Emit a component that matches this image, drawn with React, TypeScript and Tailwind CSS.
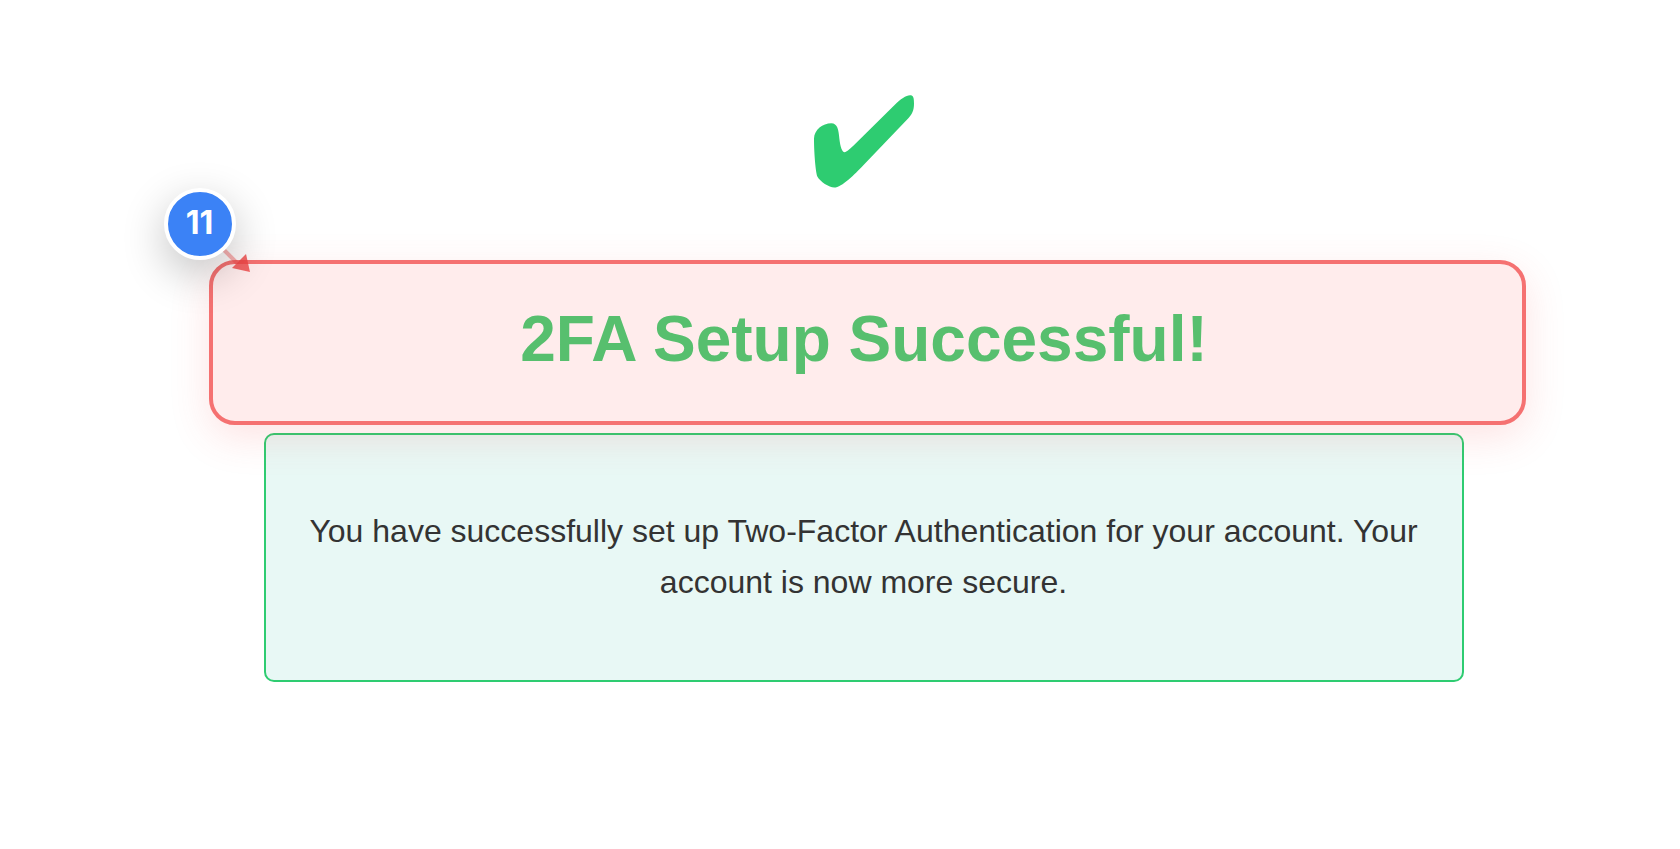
const STEP = 11;

function CheckMark() {
  return (
    <svg viewBox="102 75 300 278" className="mr-[6px] h-[93px] w-[100px]" fill="#2ecc71" aria-hidden="true">
      <path d="M102 205C103 178 128 159 154 159C172 159 176 178 178 205C181 230 186 246 194 246C200 246 208 238 220 227L343 105C362 86 378 75 390 75C400 75 402 82 402 100C402 122 396 132 385 144L250 285C225 311 185 352 163 352C147 352 120 334 112 319C106 300 102 240 102 205Z" />
    </svg>
  );
}

function StepMarker({ step }: { step: number }) {
  return (
    <>
      {/* Pointer from the badge to the highlighted area */}
      <svg
        viewBox="0 0 32 32"
        className="absolute -top-5 left-[7px] size-8"
        aria-hidden="true"
      >
        <path d="M4 6L17 19" stroke="#ef4444" strokeOpacity="0.4" strokeWidth="4" />
        <path d="M26 10L30 28L12 24Z" fill="#ef4444" fillOpacity="0.8" />
      </svg>
      <div className="absolute -left-[49px] -top-[76px] flex size-[72px] items-center justify-center rounded-full border-4 border-white bg-[#3b82f6] pb-[2px] font-[Inter,sans-serif] text-[32px] font-bold leading-none text-white shadow-[0_14px_44px_rgba(0,0,0,0.24)]">
        {step}
      </div>
    </>
  );
}

export default function App() {
  return (
    <main className="flex min-h-screen flex-col items-center bg-white pl-[54px] pt-[95px] font-['Liberation_Sans',Arial,sans-serif]">
      <div className="flex w-full max-w-[1317px] flex-col items-center">
        <CheckMark />

        <div className="relative z-10 mt-[72px] w-full rounded-[26px] border-4 border-[#f57171] bg-[#ffecec] pb-[42px] pr-[6px] pt-[35px] text-center shadow-[0_12px_40px_rgba(239,68,68,0.15)]">
          <h1 className="text-[64px] font-bold leading-[80px] text-[#57bf6e]">2FA Setup Successful!</h1>
          <StepMarker step={STEP} />
        </div>

        <div className="mt-2 w-full pl-[55px] pr-[62px]">
          <div className="rounded-[10px] border-2 border-[#2ecc71] bg-[#e8f8f5] px-10 pb-[72px] pt-[71px] text-center">
            <p className="text-[32px] leading-[51px] text-[#333333]">
              You have successfully set up Two-Factor Authentication for your account. Your account is now more
              secure.
            </p>
          </div>
        </div>
      </div>
    </main>
  );
}
